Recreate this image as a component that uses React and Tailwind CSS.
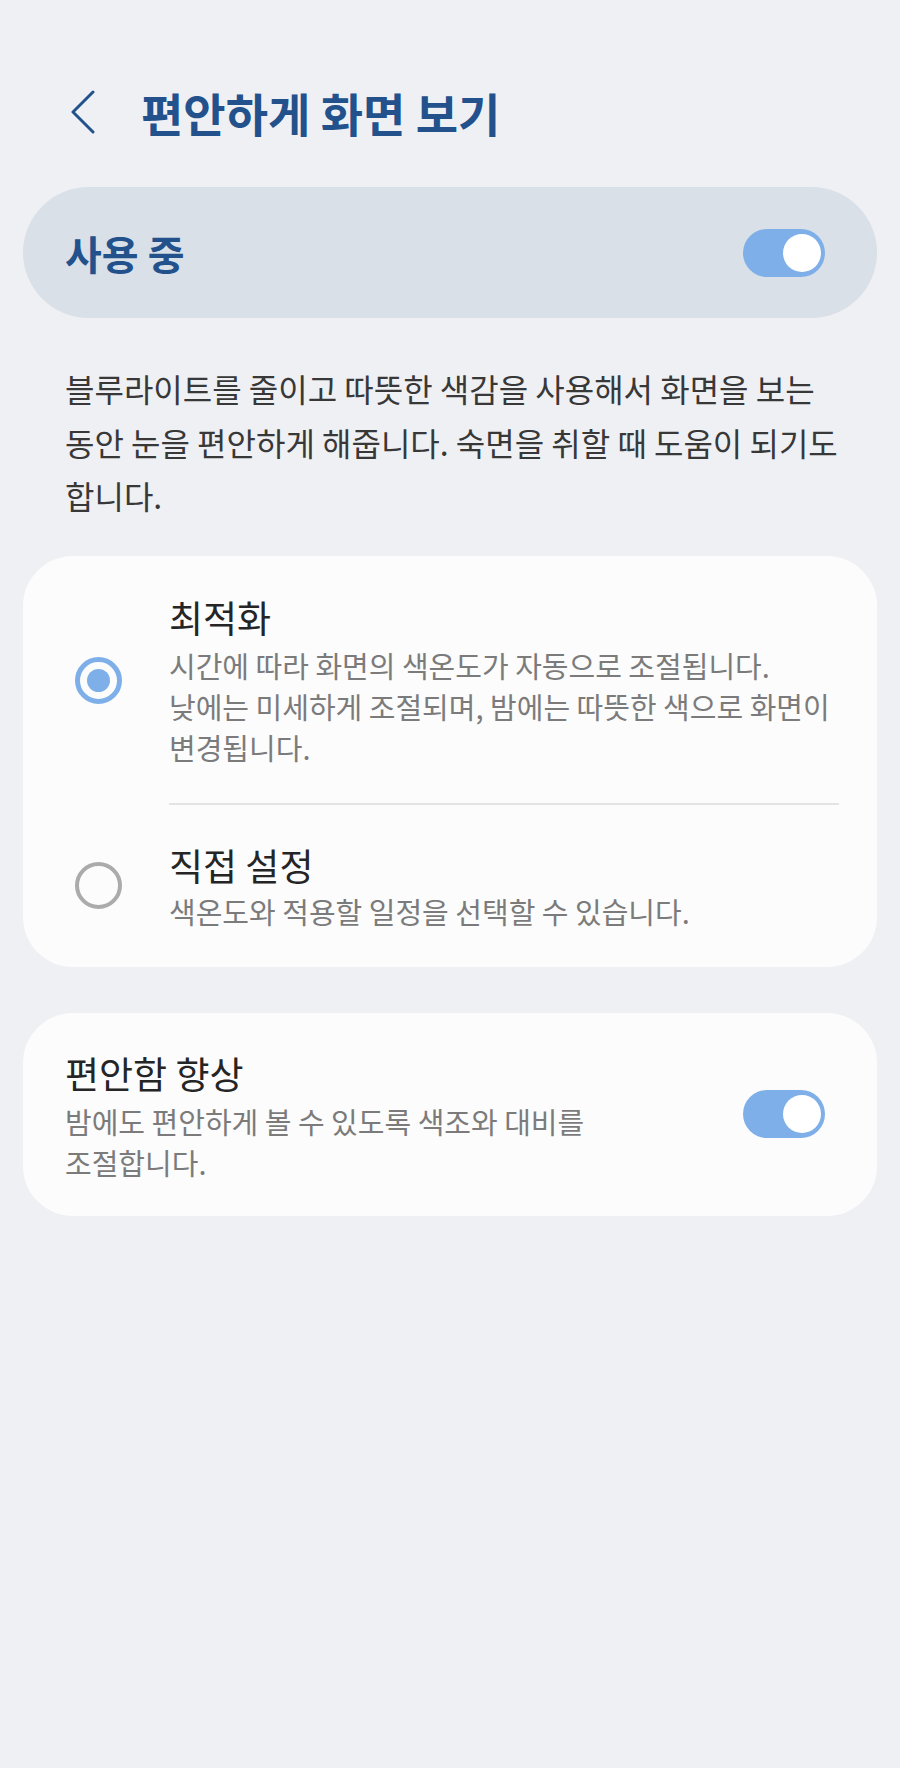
import React, { useState } from 'react'

const font = { fontFamily: '"Noto Sans CJK KR", "Noto Sans", sans-serif' }

function Toggle({ on, onClick, className = '' }) {
    return (
        <button
            onClick={onClick}
            className={`flex items-center w-[82px] h-[48px] rounded-full px-[4px] shrink-0 ${on ? 'bg-[#7eafe8] justify-end' : 'bg-[#b8bcc2] justify-start'} ${className}`}
        >
            <span className="block w-[38px] h-[38px] rounded-full bg-white" />
        </button>
    )
}

function Radio({ checked }) {
    return (
        <div
            className={`w-[47px] h-[47px] rounded-full shrink-0 flex items-center justify-center ${checked ? 'border-[5px] border-[#7eafe8]' : 'border-[4px] border-[#ababab]'}`}
        >
            {checked && <div className="w-[23px] h-[23px] rounded-full bg-[#7eafe8]" />}
        </div>
    )
}

export default function App() {
    const [enabled, setEnabled] = useState(true)
    const [mode, setMode] = useState('auto')
    const [comfort, setComfort] = useState(true)

    return (
        <div className="min-h-[1768px] w-[900px] bg-[#eff0f4] pt-[89px]" style={font}>
            {/* header */}
            <div className="flex items-center h-[46px] pl-[70px]">
                <svg width="26" height="44" viewBox="0 0 26 44" fill="none">
                    <path d="M23 2 L3 22 L23 42" stroke="#23518c" strokeWidth="3" strokeLinecap="round" strokeLinejoin="round" />
                </svg>
                <h1 className="ml-[45px] text-[46px] leading-[46px] font-bold text-[#23518c] whitespace-nowrap">
                    편안하게 화면 보기
                </h1>
            </div>

            {/* on/off */}
            <div className="mx-[23px] mt-[52px] h-[131px] rounded-full bg-[#d9e0e8] flex items-center justify-between pl-[42px] pr-[52px]">
                <span className="text-[40px] font-bold text-[#23518c] leading-none">사용 중</span>
                <Toggle on={enabled} onClick={() => setEnabled(!enabled)} />
            </div>

            <p className="mt-[44px] px-[65px] text-[32px] leading-[53.5px] text-[#383838] whitespace-nowrap">
                블루라이트를 줄이고 따뜻한 색감을 사용해서 화면을 보는<br />
                동안 눈을 편안하게 해줍니다. 숙면을 취할 때 도움이 되기도<br />
                합니다.
            </p>

            {/* mode options */}
            <div className="mx-[23px] mt-[33px] rounded-[50px] bg-[#fcfcfc]">
                <div className="flex items-center pl-[52px] pr-[38px] cursor-pointer" onClick={() => setMode('auto')}>
                    <Radio checked={mode === 'auto'} />
                    <div className="ml-[47px] flex-1 pt-[39px] pb-[35px] border-b-[2px] border-[#e3e3e5]">
                        <div className="text-[37px] leading-[44px] text-[#252525] font-normal">최적화</div>
                        <div className="mt-[6px] text-[29px] leading-[41px] text-[#7b7b7b] whitespace-nowrap">
                            시간에 따라 화면의 색온도가 자동으로 조절됩니다.<br />
                            낮에는 미세하게 조절되며, 밤에는 따뜻한 색으로 화면이<br />
                            변경됩니다.
                        </div>
                    </div>
                </div>
                <div className="flex items-center pl-[52px] pr-[38px] cursor-pointer" onClick={() => setMode('custom')}>
                    <Radio checked={mode === 'custom'} />
                    <div className="ml-[47px] flex-1 pt-[38px] pb-[35px]">
                        <div className="text-[37px] leading-[44px] text-[#252525] font-normal">직접 설정</div>
                        <div className="mt-[4px] text-[29px] leading-[41px] text-[#7b7b7b] whitespace-nowrap">
                            색온도와 적용할 일정을 선택할 수 있습니다.
                        </div>
                    </div>
                </div>
            </div>

            {/* comfort */}
            <div className="mx-[23px] mt-[46px] rounded-[50px] bg-[#fcfcfc] flex items-center justify-between pl-[42px] pr-[52px] pt-[38px] pb-[33px]">
                <div>
                    <div className="text-[37px] leading-[44px] text-[#252525] font-normal">편안함 향상</div>
                    <div className="mt-[6px] text-[29px] leading-[41px] text-[#7b7b7b] whitespace-nowrap">
                        밤에도 편안하게 볼 수 있도록 색조와 대비를<br />
                        조절합니다.
                    </div>
                </div>
                <Toggle on={comfort} onClick={() => setComfort(!comfort)} className="mb-[5px]" />
            </div>
        </div>
    )
}
